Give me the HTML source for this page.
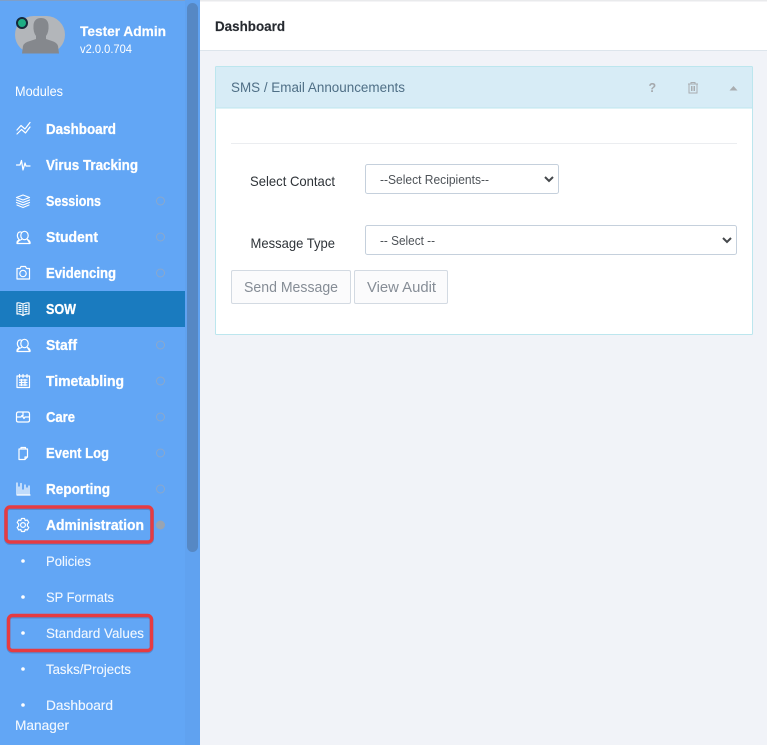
<!DOCTYPE html>
<html><head><meta charset="utf-8"><style>
html,body{margin:0;padding:0;width:767px;height:745px;overflow:hidden;background:#f1f3f8}
svg{display:block;position:absolute;left:0;top:0}
text{font-family:"Liberation Sans",sans-serif}
.m{font-size:14.5px;font-weight:700;fill:#fff;stroke:#fff;stroke-width:.3}
.s{font-size:14.2px;fill:#f2f8ff;stroke:#f2f8ff;stroke-width:.12}
.i{fill:none;stroke:#fff;stroke-width:1.2;stroke-linejoin:round;stroke-linecap:round}
.d{fill:none;stroke:#8aa8cc;stroke-width:1}
</style></head><body>
<svg width="767" height="745" viewBox="0 0 767 745" xmlns="http://www.w3.org/2000/svg">
<rect width="767" height="745" fill="#f1f3f8"/>
<!-- top bar -->
<rect x="200" y="0" width="567" height="50" fill="#fff"/>
<rect x="200" y="0" width="567" height="1.5" fill="#e9eaec"/>
<rect x="200" y="50" width="567" height="1" fill="#dde5ec"/>
<text x="215" y="31" font-size="14" font-weight="700" fill="#262a30" stroke="#262a30" stroke-width=".15" textLength="70" lengthAdjust="spacingAndGlyphs">Dashboard</text>
<!-- sidebar -->
<rect x="0" y="0" width="200" height="745" fill="#62a6f5"/>
<rect x="0" y="0" width="200" height="1" fill="#7f9fc8"/>
<rect x="185" y="0" width="15" height="745" fill="#60a2f0"/>
<rect x="187" y="3" width="11" height="549" rx="5.5" fill="#5688c4"/>
<!-- avatar -->
<rect x="15" y="16" width="50" height="37.500" rx="18.700" fill="#b3b6ba"/>
<path d="M22 53.500 L23 46 Q24 42.500 30 41 L36 39 V36 Q33 32 33.500 25 C34 20 37 18 41 18 C45 18 48 20 48.500 25 Q49 32 46 36 V39 L52 41 Q57 42.500 58 46 L59 53.500 Z" fill="#85888d"/>
<circle cx="22" cy="23" r="5" fill="#1fae84" stroke="#16293a" stroke-width="2"/>
<text x="80" y="36" font-size="14" font-weight="700" fill="#fff" stroke="#fff" stroke-width=".2" textLength="86" lengthAdjust="spacingAndGlyphs">Tester Admin</text>
<text x="80" y="53" font-size="12" fill="#fff" textLength="52" lengthAdjust="spacingAndGlyphs">v2.0.0.704</text>
<text x="15" y="96" font-size="13.500" fill="#fff" textLength="48" lengthAdjust="spacingAndGlyphs">Modules</text>
<!-- active -->
<rect x="0" y="291" width="185" height="36" fill="#1a7bbf"/>
<!-- menu -->
<text class="m" x="46" y="134" textLength="70" lengthAdjust="spacingAndGlyphs">Dashboard</text>
<text class="m" x="46" y="170" textLength="92" lengthAdjust="spacingAndGlyphs">Virus Tracking</text>
<text class="m" x="46" y="206" textLength="55" lengthAdjust="spacingAndGlyphs">Sessions</text>
<text class="m" x="46" y="242" textLength="52" lengthAdjust="spacingAndGlyphs">Student</text>
<text class="m" x="46" y="278" textLength="70" lengthAdjust="spacingAndGlyphs">Evidencing</text>
<text class="m" x="46" y="314" textLength="30" lengthAdjust="spacingAndGlyphs">SOW</text>
<text class="m" x="46" y="350" textLength="31" lengthAdjust="spacingAndGlyphs">Staff</text>
<text class="m" x="46" y="386" textLength="78" lengthAdjust="spacingAndGlyphs">Timetabling</text>
<text class="m" x="46" y="422" textLength="29" lengthAdjust="spacingAndGlyphs">Care</text>
<text class="m" x="46" y="458" textLength="63" lengthAdjust="spacingAndGlyphs">Event Log</text>
<text class="m" x="46" y="494" textLength="64" lengthAdjust="spacingAndGlyphs">Reporting</text>
<text class="m" x="46" y="530" textLength="98" lengthAdjust="spacingAndGlyphs">Administration</text>
<text class="s" x="46" y="566" textLength="45" lengthAdjust="spacingAndGlyphs">Policies</text>
<text class="s" x="46" y="602" textLength="68" lengthAdjust="spacingAndGlyphs">SP Formats</text>
<text class="s" x="46" y="638" textLength="98" lengthAdjust="spacingAndGlyphs">Standard Values</text>
<text class="s" x="46" y="674" textLength="85" lengthAdjust="spacingAndGlyphs">Tasks/Projects</text>
<text class="s" x="46" y="710" textLength="67" lengthAdjust="spacingAndGlyphs">Dashboard</text>
<text class="s" x="15" y="730" textLength="54" lengthAdjust="spacingAndGlyphs">Manager</text>
<!-- bullets -->
<g fill="#fff"><circle cx="23" cy="561" r="1.800"/><circle cx="23" cy="597" r="1.800"/><circle cx="23" cy="633" r="1.800"/><circle cx="23" cy="669" r="1.800"/><circle cx="23" cy="705" r="1.800"/></g>
<!-- right dots -->
<circle class="d" cx="160.500" cy="201" r="4"/><circle class="d" cx="160.500" cy="237" r="4"/><circle class="d" cx="160.500" cy="273" r="4"/><circle class="d" cx="160.500" cy="345" r="4"/><circle class="d" cx="160.500" cy="381" r="4"/><circle class="d" cx="160.500" cy="417" r="4"/><circle class="d" cx="160.500" cy="453" r="4"/><circle class="d" cx="160.500" cy="489" r="4"/>
<circle cx="160.500" cy="525" r="4.500" fill="#98a4b2"/>
<!-- icons -->
<g class="i">
<path d="M17 130 L21 125.500 L25 129 L30 122.500 M17 134 L21.500 129.500 L25.500 133 L30 127"/>
<path d="M16.500 165 H20 L21.500 160.500 L23 170 L25 163 L26 166 H30"/>
<path d="M23 195 L29.500 197.500 L23 200 L16.500 197.500 Z M16.500 200 L23 202.500 L29.500 200 M16.500 202.500 L23 205 L29.500 202.500 M17 205 L23 207.500 L29 205"/>
<path d="M21 232 C17.500 231.500 16 236 19 239.500 M17 243.500 Q16.500 241 19.500 239.800"/>
<ellipse cx="24.500" cy="235.500" rx="3.700" ry="4.200"/>
<path d="M17.500 243.500 Q17.500 241 21.500 239.500 M27.500 239.500 Q30.500 241 30 243.500 Z M17.500 243.500 H30"/>
<path d="M17 268.500 H20 L21 266.500 H25.500 L26.500 268.500 H29.500 V279 H17 Z"/>
<circle cx="23" cy="273.500" r="3.200"/>
<path d="M23 304 C21 303 19 302.500 17 303 V314 C19 313.500 21 314 23 315.500 C25 314 27 313.500 29 314 V303 C27 302.500 25 303 23 304 Z M23 304 V315.500 M19 305.500 H21 M19 307.500 H21 M19 309.500 H21 M19 311.500 H21 M25 305.500 H27 M25 307.500 H27 M25 309.500 H27 M25 311.500 H27"/>
<path d="M21 340 C17.500 339.500 16 344 19 347.500 M17 351.500 Q16.500 349 19.500 347.800"/>
<ellipse cx="24.500" cy="343.500" rx="3.700" ry="4.200"/>
<path d="M17.500 351.500 Q17.500 349 21.500 347.500 M27.500 347.500 Q30.500 349 30 351.500 Z M17.500 351.500 H30"/>
<path d="M17 376 H29.500 V387.500 H17 Z M19.500 374.500 V377.500 M23 374.500 V377.500 M27 374.500 V377.500 M19.500 380 H27 M19.500 382.500 H27 M19.500 385 H27 M21.500 379.500 V385.500 M25 379.500 V385.500"/>
<path d="M18.500 412 H27.500 Q29.500 412 29.500 414 V420.500 Q29.500 422 27.500 422 H18.500 Q16.500 422 16.500 420.500 V414 Q16.500 412 18.500 412 Z M16.500 417 H21 L22 415.500 L24 418.500 L25 417 H29.500 M23 412 V416"/>
<path d="M19 449 H27.500 V457 L25 459.500 H19 Z M21 449 V447.500 H25.500 V449 M27.500 457 H25 V459.500"/>
<path d="M17 483 V495 H30 M19 495 V487 M21 495 V483.500 M23 495 V490 M25 495 V485 M27 495 V488 M29 495 V486"/>
<circle cx="23" cy="525" r="2.400"/>
<path d="M21.500 518.500 H24.500 L25.200 520.500 L27.300 520 L28.800 522.500 L27.400 524 V526 L28.800 527.500 L27.300 530 L25.200 529.500 L24.500 531.500 H21.500 L20.800 529.500 L18.700 530 L17.200 527.500 L18.600 526 V524 L17.200 522.500 L18.700 520 L20.800 520.500 Z"/>
</g>
<!-- red annotations -->
<rect x="6" y="507" width="146" height="35" rx="4" fill="none" stroke="#3c64a0" stroke-width="4" opacity=".4" transform="translate(0 1)"/>
<rect x="6" y="507" width="146" height="35" rx="4" fill="none" stroke="#e63b42" stroke-width="3.400"/>
<rect x="8.500" y="615.500" width="143" height="35" rx="4" fill="none" stroke="#3c64a0" stroke-width="4" opacity=".4" transform="translate(0 1)"/>
<rect x="8.500" y="615.500" width="143" height="35" rx="4" fill="none" stroke="#e63b42" stroke-width="3.400"/>
<!-- panel -->
<rect x="215.500" y="66.500" width="537" height="268" rx="1" fill="#fff" stroke="#bce6ee"/>
<rect x="216" y="67" width="536" height="40.500" fill="#d7ecf6"/>
<rect x="216" y="107.500" width="536" height="1" fill="#bce6ee"/>
<text x="231" y="92" font-size="13.500" fill="#4f6f86" textLength="174" lengthAdjust="spacingAndGlyphs">SMS / Email Announcements</text>
<text x="648.500" y="92" font-size="12.500" font-weight="700" fill="#a5a9ad">?</text>
<g fill="none" stroke="#a9adb0" stroke-width="1"><path d="M688 84 H698 M691 84 V82.500 H695 V84 M689 84 V93 H697 V84 M691.500 86 V91 M693 86 V91 M694.500 86 V91"/></g>
<path d="M729.500 90.500 L733.500 86 L737.500 90.500 Z" fill="#a9adb0"/>
<rect x="231" y="143" width="506" height="1" fill="#ebedf0"/>
<!-- form -->
<text x="250" y="186" font-size="14" fill="#2e3338" textLength="85" lengthAdjust="spacingAndGlyphs">Select Contact</text>
<text x="250.500" y="248" font-size="14" fill="#2e3338" textLength="84.500" lengthAdjust="spacingAndGlyphs">Message Type</text>
<rect x="365.500" y="164.500" width="193" height="29" rx="2" fill="#fff" stroke="#c5d0dc"/>
<text x="380" y="184" font-size="12.500" fill="#4e5358" textLength="109" lengthAdjust="spacingAndGlyphs">--Select Recipients--</text>
<path d="M545 177 L549 181 L553 177" fill="none" stroke="#45484c" stroke-width="2"/>
<rect x="365.500" y="225.500" width="371" height="29" rx="2" fill="#fff" stroke="#c5d0dc"/>
<text x="380" y="245" font-size="12.500" fill="#4e5358" textLength="55" lengthAdjust="spacingAndGlyphs">-- Select --</text>
<path d="M723 238 L727 242 L731 238" fill="none" stroke="#45484c" stroke-width="2"/>
<rect x="231.500" y="270.500" width="119" height="33" rx="1.500" fill="#fbfbfc" stroke="#d3dae2"/>
<text x="244" y="292" font-size="14.500" fill="#868d96" textLength="94" lengthAdjust="spacingAndGlyphs">Send Message</text>
<rect x="354.500" y="270.500" width="93" height="33" rx="1.500" fill="#fbfbfc" stroke="#d3dae2"/>
<text x="367" y="292" font-size="14.500" fill="#868d96" textLength="69" lengthAdjust="spacingAndGlyphs">View Audit</text>
</svg>
</body></html>
